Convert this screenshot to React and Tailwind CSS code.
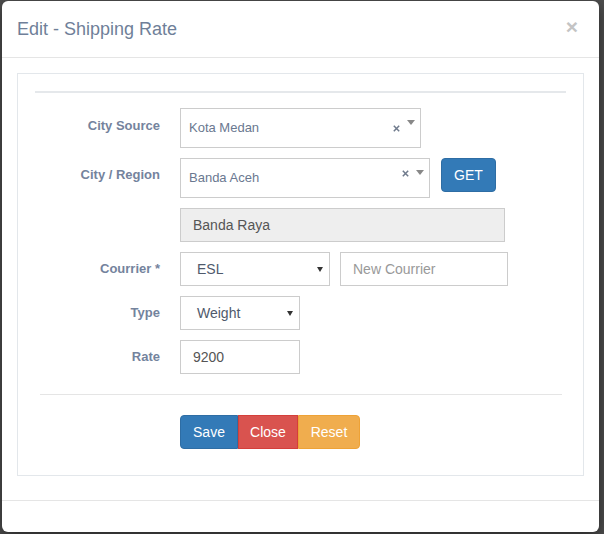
import React from "react";

function Caret({ className = "" }) {
  return (
    <svg width="8" height="5" viewBox="0 0 8 5" className={className}>
      <path d="M0 0 L8 0 L4 5 Z" fill="#888" />
    </svg>
  );
}

function SmallCaret({ className = "" }) {
  return (
    <svg width="6" height="5" viewBox="0 0 6 5" className={className}>
      <path d="M0 0 L6 0 L3 5 Z" fill="#333" />
    </svg>
  );
}

function ClearX({ className = "" }) {
  return (
    <svg width="7" height="7" viewBox="0 0 7 7" className={className}>
      <path d="M0.8 0.8 L6.2 6.2 M6.2 0.8 L0.8 6.2" stroke="#6f7a8c" strokeWidth="1.5" />
    </svg>
  );
}

function Label({ children, pt = "pt-[7px]" }) {
  return (
    <div className={`w-[142px] shrink-0 text-right text-[13px] leading-[20px] font-bold text-[#74839d] ${pt}`}>
      {children}
    </div>
  );
}

export default function App() {
  return (
    <div
      className="w-[604px] h-[534px] bg-[#4e4e4e] pt-[1px] pl-[2px] overflow-hidden"
      style={{ fontFamily: '"Liberation Sans", Arial, sans-serif' }}
    >
      <div className="w-[597px] h-[531px] bg-white rounded-[6px] flex flex-col shadow-[0_5px_15px_rgba(0,0,0,0.5)] overflow-hidden">
        {/* Header */}
        <div className="h-[57px] shrink-0 border-b border-[#e5e5e5] pl-[15px] pr-[21px] flex items-center justify-between">
          <div className="text-[18px] leading-[20px] text-[#6f7f99] pb-[1px]">Edit - Shipping Rate</div>
          <div className="text-[21px] leading-[20px] font-bold text-[#c4c4c4] pb-[5px]">×</div>
        </div>

        {/* Body */}
        <div className="shrink-0 px-[15px] pt-[15px] pb-[24px]">
          <div className="h-[403px] border border-[#e3e7eb] flex flex-col">
            <div className="mt-[17px] mx-[17px] h-[2px] bg-[#e5e8eb]" />

            <div className="mt-[15px] flex flex-col gap-[10px]">
              {/* City Source */}
              <div className="flex gap-[20px]">
                <Label pt="pt-[8px]">City Source</Label>
                <div className="relative w-[241px] h-[40px] border border-[#ccc] flex items-center pl-[8px] text-[13px] text-[#6a7890]">
                  Kota Medan
                  <ClearX className="absolute right-[20px] top-[16px]" />
                  <Caret className="absolute right-[5px] top-[11px]" />
                </div>
              </div>

              {/* City / Region */}
              <div className="flex gap-[20px]">
                <Label pt="pt-[7px]">City / Region</Label>
                <div className="relative w-[250px] h-[40px] border border-[#ccc] flex items-center pl-[8px] text-[13px] text-[#6a7890]">
                  Banda Aceh
                  <ClearX className="absolute right-[20px] top-[11px]" />
                  <Caret className="absolute right-[5px] top-[11px]" />
                </div>
                <div className="ml-[-9px] w-[55px] h-[34px] rounded-[4px] bg-[#337ab7] border border-[#2e6da4] text-white text-[14px] flex items-center justify-center">
                  GET
                </div>
              </div>

              {/* Banda Raya */}
              <div className="flex gap-[20px]">
                <div className="w-[142px] shrink-0" />
                <div className="w-[325px] h-[34px] border border-[#ccc] bg-[#eeeeee] flex items-center pl-[12px] text-[14px] text-[#555]">
                  Banda Raya
                </div>
              </div>

              {/* Courrier */}
              <div className="flex gap-[20px]">
                <Label>Courrier *</Label>
                <div className="flex gap-[10px]">
                  <div className="relative w-[150px] h-[34px] border border-[#ccc] flex items-center pl-[16px] text-[14px] text-[#4f5a6c]">
                    ESL
                    <SmallCaret className="absolute right-[6px] top-[14px]" />
                  </div>
                  <div className="w-[168px] h-[34px] border border-[#ccc] flex items-center pl-[12px] text-[14px] text-[#999]">
                    New Courrier
                  </div>
                </div>
              </div>

              {/* Type */}
              <div className="flex gap-[20px]">
                <Label>Type</Label>
                <div className="relative w-[120px] h-[34px] border border-[#ccc] flex items-center pl-[16px] text-[14px] text-[#4f5a6c]">
                  Weight
                  <SmallCaret className="absolute right-[6px] top-[14px]" />
                </div>
              </div>

              {/* Rate */}
              <div className="flex gap-[20px]">
                <Label>Rate</Label>
                <div className="w-[120px] h-[34px] border border-[#ccc] flex items-center pl-[12px] text-[14px] text-[#555]">
                  9200
                </div>
              </div>
            </div>

            <div className="mt-[20px] ml-[22px] mr-[21px] h-[1px] bg-[#e5e5e5]" />

            <div className="mt-[20px] flex pl-[162px]">
              <div className="w-[58px] h-[34px] bg-[#337ab7] border border-[#2e6da4] rounded-l-[4px] text-white text-[14px] flex items-center justify-center">
                Save
              </div>
              <div className="w-[60px] h-[34px] bg-[#d9534f] border border-[#d43f3a] text-white text-[14px] flex items-center justify-center">
                Close
              </div>
              <div className="w-[62px] h-[34px] bg-[#f0ad4e] border border-[#eea236] rounded-r-[4px] text-white text-[14px] flex items-center justify-center">
                Reset
              </div>
            </div>
          </div>
        </div>

        {/* Footer */}
        <div className="flex-1 border-t border-[#e5e5e5]" />
      </div>
    </div>
  );
}
